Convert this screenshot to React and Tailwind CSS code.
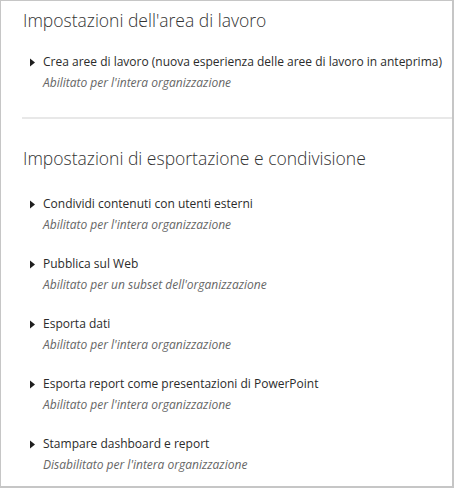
import React from 'react';

const Caret = () => (
    <svg width="5" height="9" viewBox="0 0 5 9" className="shrink-0 mt-[4px]">
        <path d="M0 0.5 L5 4.5 L0 8.5 Z" fill="#1f1f1f" />
    </svg>
);

const Setting = ({ title, status }) => (
    <div className="flex gap-[8px] pl-[29px] h-[60px]">
        <Caret />
        <div className="flex flex-col">
            <span className="text-[12px] leading-[16px] text-[#2b2b2b]">{title}</span>
            <span className="text-[12px] leading-[16px] mt-[5px] italic text-[#666666]">{status}</span>
        </div>
    </div>
);

const SectionTitle = ({ children }) => (
    <h2 className="pl-[22px] text-[17.5px] leading-[26px] font-light text-[#333333]">{children}</h2>
);

export default function App() {
    return (
        <div
            className="w-[454px] h-[488px] bg-white border-t border-l border-r-2 border-b-2 border-[#c6c6c6] overflow-hidden"
            style={{ fontFamily: '"Open Sans", "Noto Sans", sans-serif' }}
        >
            <div className="pt-[6px]">
                <SectionTitle>Impostazioni dell'area di lavoro</SectionTitle>
            </div>
            <div className="mt-[21px]">
                <Setting
                    title="Crea aree di lavoro (nuova esperienza delle aree di lavoro in anteprima)"
                    status="Abilitato per l'intera organizzazione"
                />
            </div>

            <div className="ml-[21px] h-[2px] bg-[#e8e8e8] mt-[3px]" />

            <div className="mt-[26px]">
                <SectionTitle>Impostazioni di esportazione e condivisione</SectionTitle>
            </div>
            <div className="mt-[25px]">
                <Setting title="Condividi contenuti con utenti esterni" status="Abilitato per l'intera organizzazione" />
                <Setting title="Pubblica sul Web" status="Abilitato per un subset dell'organizzazione" />
                <Setting title="Esporta dati" status="Abilitato per l'intera organizzazione" />
                <Setting title="Esporta report come presentazioni di PowerPoint" status="Abilitato per l'intera organizzazione" />
                <Setting title="Stampare dashboard e report" status="Disabilitato per l'intera organizzazione" />
            </div>
        </div>
    );
}
